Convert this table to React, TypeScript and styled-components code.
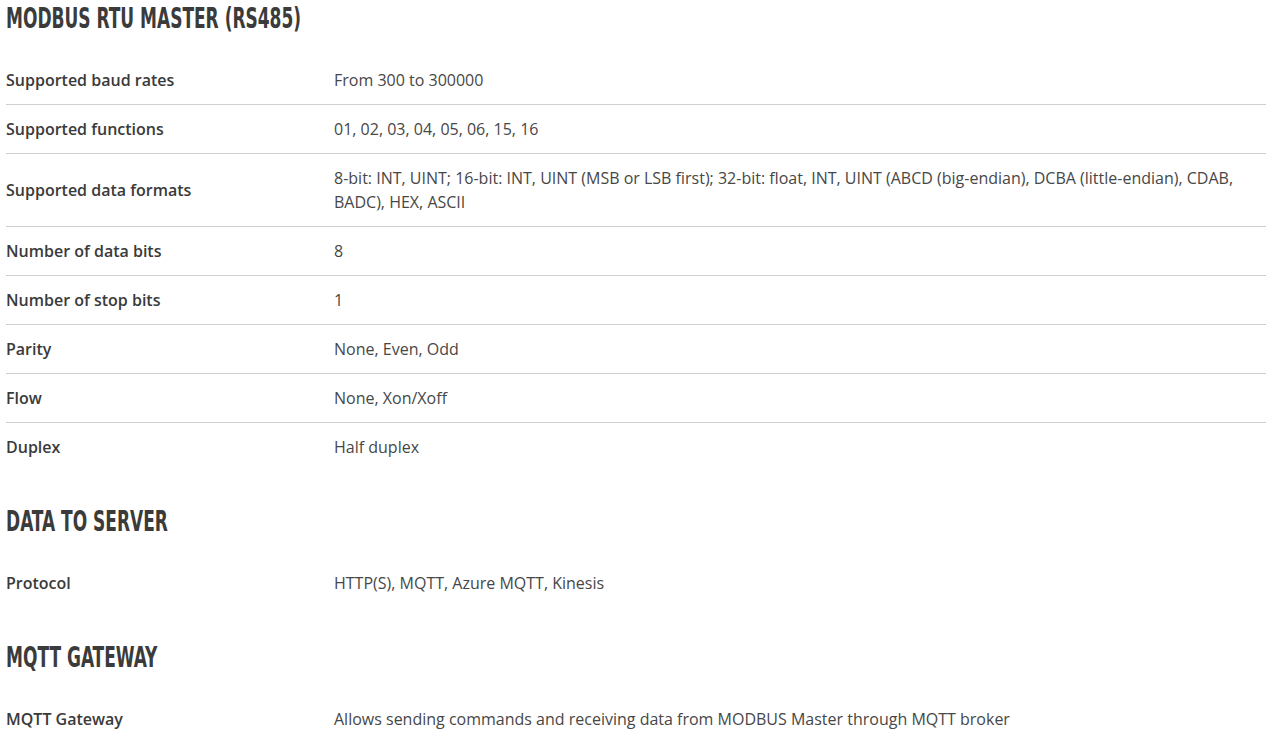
import React from "react";
import styled, { createGlobalStyle } from "styled-components";

const GlobalStyle = createGlobalStyle`
  html, body { margin: 0; padding: 0; background: #ffffff; }
  body { font-family: "Open Sans", "Liberation Sans", sans-serif; }
`;

const Page = styled.div`
  width: 1260px;
  padding: 3px 5px 0 6px;
`;

const Section = styled.section`
  & + & { margin-top: 35px; }
`;

const Heading = styled.h2`
  margin: 0 0 23px 0;
  font-family: "DejaVu Sans Condensed", "DejaVu Sans", sans-serif;
  font-stretch: condensed;
  font-weight: 700;
  font-size: 29px;
  line-height: 30px;
  color: #3b3b3b;
  white-space: nowrap;
  transform: scaleX(0.652);
  transform-origin: left center;
`;

const Table = styled.div`
  display: flex;
  flex-direction: column;
`;

const Row = styled.div`
  display: grid;
  grid-template-columns: 328px 1fr;
  align-items: center;
  padding: 12px 0;
  & + & { border-top: 1px solid #cfcfcf; }
`;

const Label = styled.div`
  font-size: 16px;
  line-height: 24px;
  font-weight: 600;
  color: #3a3a3a;
`;

const Value = styled.div`
  font-size: 16px;
  line-height: 24px;
  font-weight: 400;
  color: #474747;
  padding-right: 4px;
`;

type Spec = { title: string; rows: [string, string][] };

const data: Spec[] = [
  {
    title: "MODBUS RTU MASTER (RS485)",
    rows: [
      ["Supported baud rates", "From 300 to 300000"],
      ["Supported functions", "01, 02, 03, 04, 05, 06, 15, 16"],
      [
        "Supported data formats",
        "8-bit: INT, UINT; 16-bit: INT, UINT (MSB or LSB first); 32-bit: float, INT, UINT (ABCD (big-endian), DCBA (little-endian), CDAB, BADC), HEX, ASCII",
      ],
      ["Number of data bits", "8"],
      ["Number of stop bits", "1"],
      ["Parity", "None, Even, Odd"],
      ["Flow", "None, Xon/Xoff"],
      ["Duplex", "Half duplex"],
    ],
  },
  {
    title: "DATA TO SERVER",
    rows: [["Protocol", "HTTP(S), MQTT, Azure MQTT, Kinesis"]],
  },
  {
    title: "MQTT GATEWAY",
    rows: [
      [
        "MQTT Gateway",
        "Allows sending commands and receiving data from MODBUS Master through MQTT broker",
      ],
    ],
  },
];

export default function App() {
  return (
    <>
      <GlobalStyle />
      <Page>
        {data.map((s) => (
          <Section key={s.title}>
            <Heading>{s.title}</Heading>
            <Table>
              {s.rows.map(([l, v]) => (
                <Row key={l}>
                  <Label>{l}</Label>
                  <Value>{v}</Value>
                </Row>
              ))}
            </Table>
          </Section>
        ))}
      </Page>
    </>
  );
}
